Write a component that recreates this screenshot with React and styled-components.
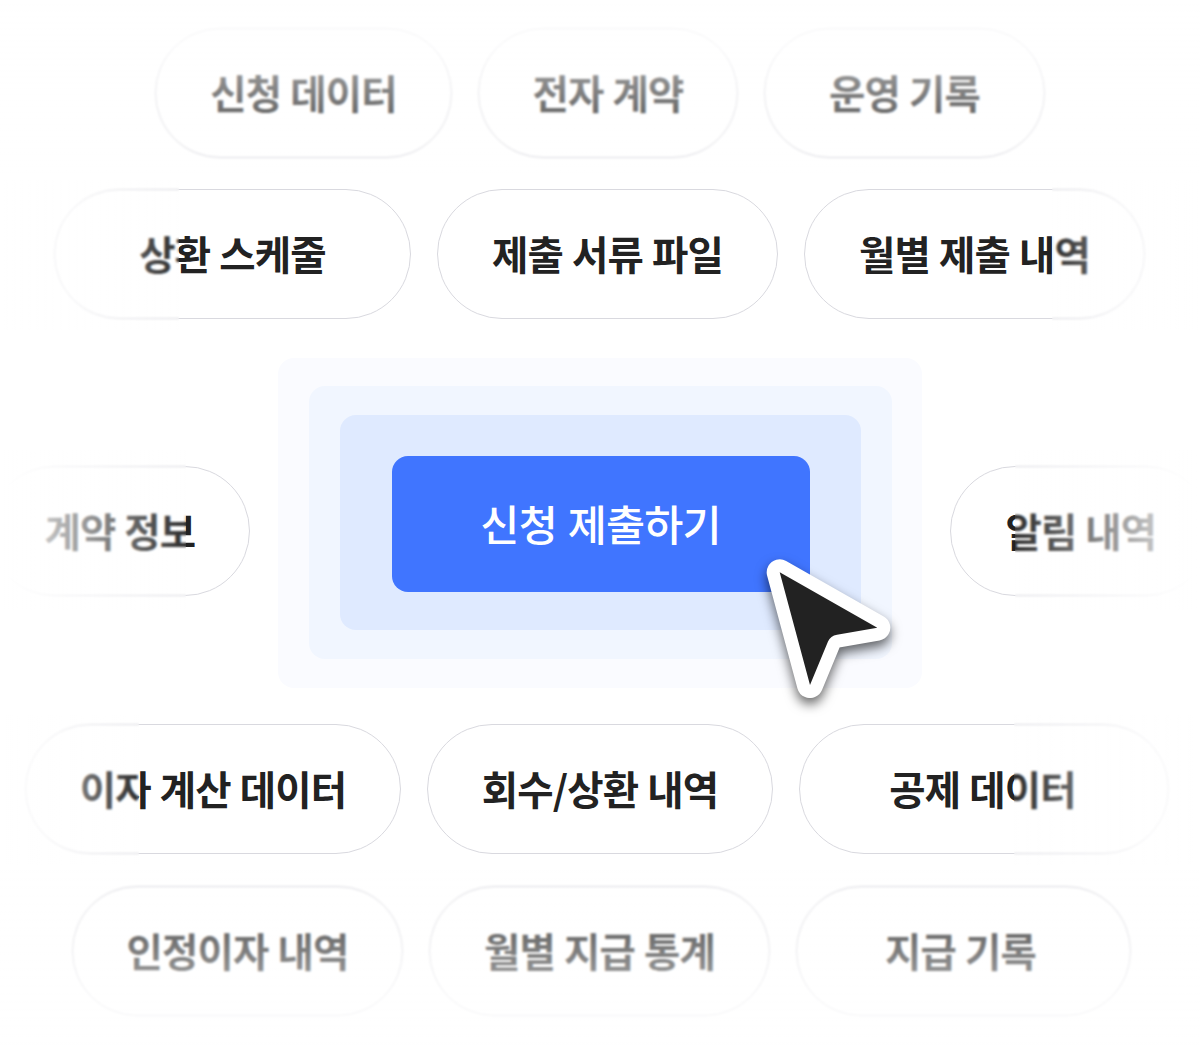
import React from 'react'
import styled, { createGlobalStyle } from 'styled-components'

const GlobalStyle = createGlobalStyle`
  * {
    box-sizing: border-box;
  }

  body {
    margin: 0;
    background: #ffffff;
    font-family: "Noto Sans CJK KR", "Noto Sans", sans-serif;
  }
`;

const Page = styled.main`
  width: 1200px;
  height: 1050px;
  padding-top: 28px;
  overflow: hidden;
  position: relative;
  display: flex;
  flex-direction: column;
  align-items: flex-start;
`;

const Row = styled.div`
  display: flex;
  flex-shrink: 0;
  gap: ${({ $gap }) => $gap || 26}px;
  margin-left: ${({ $left }) => $left}px;
  margin-bottom: ${({ $bottom }) => $bottom || 0}px;
`;

const Pill = styled.div`
  width: ${({ $width }) => $width}px;
  height: 130px;
  margin-top: ${({ $top }) => $top || 0}px;
  padding-right: ${({ $shift }) => $shift || 0}px;
  padding-bottom: 3px;
  flex-shrink: 0;
  display: flex;
  align-items: center;
  justify-content: center;
  border: 1px solid #d9d9df;
  border-radius: 65px;
  background: #ffffff;
  color: #222222;
  font-size: 39.5px;
  font-weight: 700;
  line-height: 1;
  letter-spacing: -0.85px;
  word-spacing: 0.8px;
  white-space: nowrap;
`;

const HaloOuter = styled.div`
  width: 644px;
  height: 330px;
  padding: 28px 30px 29px 31px;
  flex-shrink: 0;
  border-radius: 16px;
  background: #fafbff;
`;

const HaloMiddle = styled.div`
  height: 100%;
  padding: 29px 31px;
  border-radius: 16px;
  background: #f1f6ff;
`;

const HaloInner = styled.div`
  height: 100%;
  padding: 40.5px 51px 38px 51.5px;
  border-radius: 16px;
  background: #dfeaff;
`;

const SubmitButton = styled.button`
  display: flex;
  align-items: center;
  justify-content: center;
  width: 100%;
  height: 100%;
  padding: 0 1px 1px 0;
  border: 0;
  border-radius: 16px;
  background: #4075ff;
  color: #ffffff;
  font-family: inherit;
  font-size: 42.5px;
  font-weight: 500;
  line-height: 1;
  letter-spacing: -0.8px;
  word-spacing: 2px;
  white-space: nowrap;
`;

const Cursor = styled.svg`
  position: absolute;
  left: 750px;
  top: 540px;
  overflow: visible;
  filter: drop-shadow(0 6px 6px rgba(0, 0, 0, 0.6));
`;

// frosted fade that lies over the outer part of the cloud
const Veil = styled.div`
  position: absolute;
  top: ${({ $top }) => $top}px;
  ${({ $side }) => ($side === 'right' ? 'right: 0;' : 'left: 0;')}
  width: ${({ $width }) => ($width ? `${$width}px` : '100%')};
  height: ${({ $height }) => $height}px;
  backdrop-filter: blur(1.3px);
  background: linear-gradient(
    to ${({ $side }) => $side},
    rgba(255, 255, 255, 0.06),
    rgba(255, 255, 255, ${({ $end }) => $end || 0.85})
  );
  pointer-events: none;
`;

const ROWS_TOP = [
  {
    left: 155,
    bottom: 31,
    items: [
      { label: '신청 데이터', width: 297 },
      { label: '전자 계약', width: 260 },
      { label: '운영 기록', width: 281 },
    ],
  },
  {
    left: 54,
    bottom: 39,
    items: [
      { label: '상환 스케줄', width: 357 },
      { label: '제출 서류 파일', width: 341 },
      { label: '월별 제출 내역', width: 341 },
    ],
  },
];

const ROWS_BOTTOM = [
  {
    left: 25,
    bottom: 32,
    items: [
      { label: '이자 계산 데이터', width: 376 },
      { label: '회수/상환 내역', width: 346 },
      { label: '공제 데이터', width: 370, shift: 3 },
    ],
  },
  {
    left: 72,
    items: [
      { label: '인정이자 내역', width: 331 },
      { label: '월별 지급 통계', width: 341 },
      { label: '지급 기록', width: 335, shift: 6 },
    ],
  },
];

const VEILS = [
  { side: 'top', top: 0, height: 173 },
  { side: 'bottom', top: 870, height: 180 },
  { side: 'left', top: 180, height: 150, width: 179 },
  { side: 'right', top: 180, height: 150, width: 148 },
  { side: 'left', top: 450, height: 160, width: 186, end: 0.95 },
  { side: 'right', top: 450, height: 160, width: 185, end: 0.95 },
  { side: 'left', top: 715, height: 150, width: 139 },
  { side: 'right', top: 715, height: 150, width: 186 },
];

const PillRow = ({ row }) => (
  <Row $left={row.left} $bottom={row.bottom}>
    {row.items.map((item) => (
      <Pill key={item.label} $width={item.width} $shift={item.shift}>
        {item.label}
      </Pill>
    ))}
  </Row>
);

const ARROW = 'M29.7 32.3 L127.3 87.7 L87 94.8 Q80.5 96 78 101.5 L60 145 Z';

const App = () => {
  return (
    <>
      <GlobalStyle />
      <Page>
        {ROWS_TOP.map((row) => (
          <PillRow key={row.left} row={row} />
        ))}
        <Row $left={-10.6} $gap={28} $bottom={36}>
          <Pill $width={261} $top={108.4}>계약 정보</Pill>
          <HaloOuter>
            <HaloMiddle>
              <HaloInner>
                <SubmitButton type="button">신청 제출하기</SubmitButton>
              </HaloInner>
            </HaloMiddle>
          </HaloOuter>
          <Pill $width={261} $top={108.4}>알림 내역</Pill>
        </Row>
        {ROWS_BOTTOM.map((row) => (
          <PillRow key={row.left} row={row} />
        ))}
        {VEILS.map((veil) => (
          <Veil
            key={`${veil.side}-${veil.top}`}
            $side={veil.side}
            $top={veil.top}
            $width={veil.width}
            $height={veil.height}
            $end={veil.end}
          />
        ))}
        <Cursor width="160" height="170" viewBox="0 0 160 170">
          <path d={ARROW} fill="#fff" stroke="#fff" strokeWidth="26" strokeLinejoin="round" />
          <path d={ARROW} fill="#222" />
        </Cursor>
      </Page>
    </>
  );
};

export default App;
